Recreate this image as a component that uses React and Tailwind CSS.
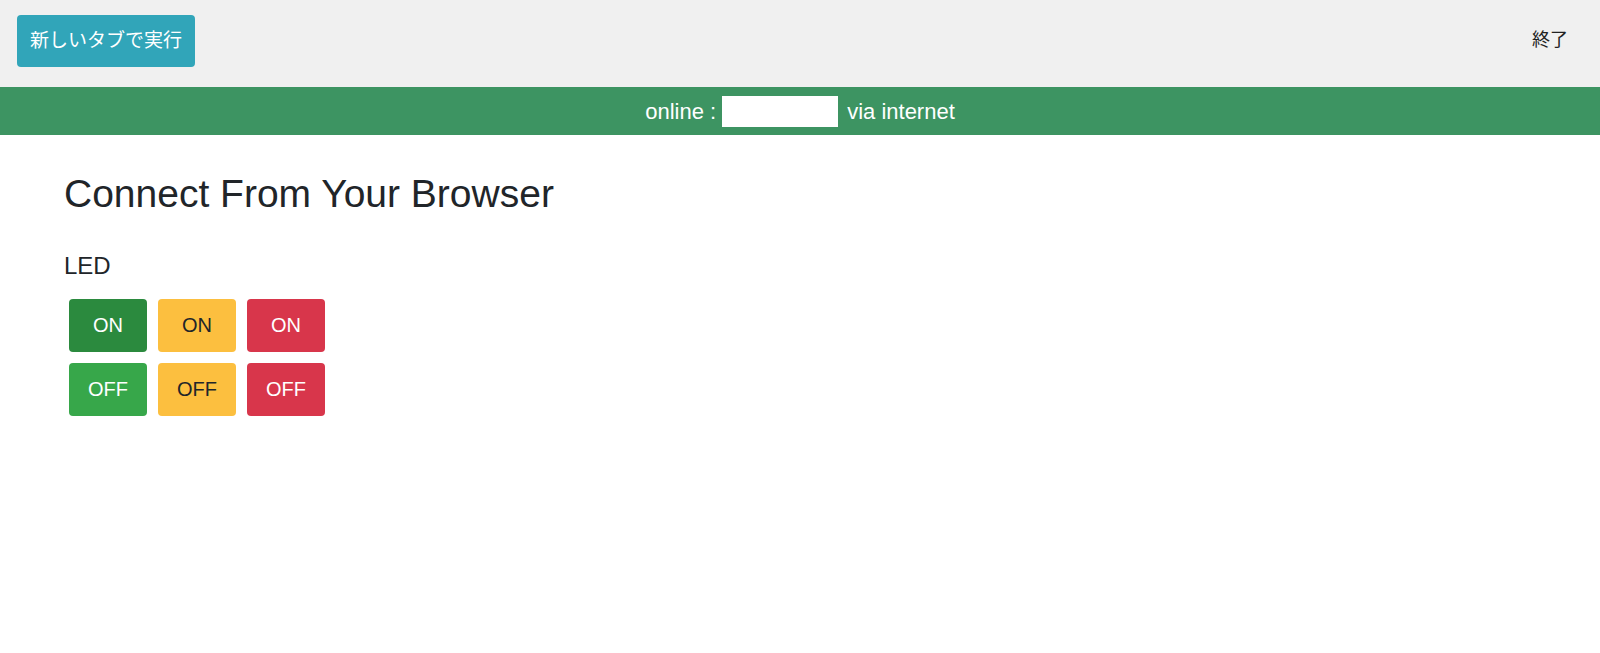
export default function App() {
  const font = { fontFamily: '"Liberation Sans", "Noto Sans CJK JP", Arial, sans-serif' };
  const rows = [
    [
      { label: 'ON', cls: 'bg-[#2b8a3e] text-white' },
      { label: 'ON', cls: 'bg-[#fcbf3f] text-[#212529]' },
      { label: 'ON', cls: 'bg-[#d8364b] text-white' },
    ],
    [
      { label: 'OFF', cls: 'bg-[#37a74a] text-white' },
      { label: 'OFF', cls: 'bg-[#fcbf3f] text-[#212529]' },
      { label: 'OFF', cls: 'bg-[#d8364b] text-white' },
    ],
  ];

  return (
    <div className="min-h-[653px] w-full bg-white" style={font}>
      <div className="flex h-[87px] items-start justify-between bg-[#f0f0f0] pl-[17px] pr-[32px] pt-[15px]">
        <button type="button" className="h-[52px] w-[178px] rounded-[4px] bg-[#31a5b9] text-[19px] text-white">
          新しいタブで実行
        </button>
        <span className="mt-[12px] text-[18px] text-[#222]">終了</span>
      </div>
      <div className="flex h-[48px] items-center justify-center bg-[#3d9462] text-[22px] text-white">
        <span>online :</span>
        <span className="ml-[6px] mr-[9px] inline-block h-[31px] w-[116px] bg-white" />
        <span>via internet</span>
      </div>
      <div className="pl-[64px] pt-[36px]">
        <h2 className="text-[39px] leading-[1.2] text-[#212529]">Connect From Your Browser</h2>
        <p className="mt-[34px] text-[24px] leading-[1.2] text-[#212529]">LED</p>
        <div className="ml-[5px] mt-[18px] flex flex-col gap-[11px]">
          {rows.map((row, i) => (
            <div key={i} className="flex gap-[11px]">
              {row.map((b, j) => (
                <button key={j} type="button" className={`h-[53px] w-[78px] rounded-[4px] text-[20px] ${b.cls}`}>
                  {b.label}
                </button>
              ))}
            </div>
          ))}
        </div>
      </div>
    </div>
  );
}
